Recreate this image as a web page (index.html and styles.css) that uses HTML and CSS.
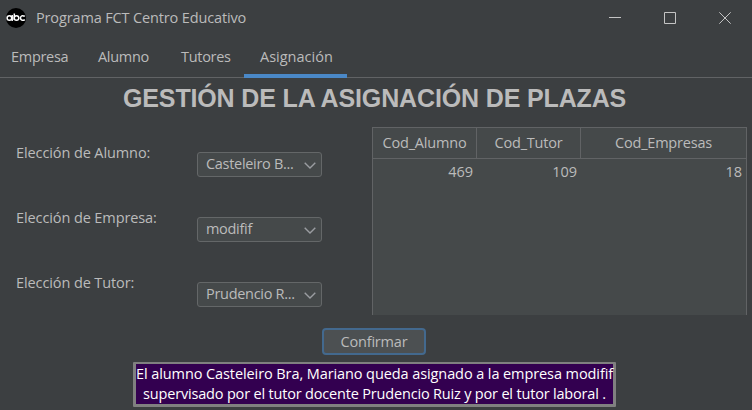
FILE: index.html
```
<!DOCTYPE html>
<html lang="es">
<head>
<meta charset="utf-8">
<title>Programa FCT Centro Educativo</title>
<link rel="stylesheet" href="styles.css">
</head>
<body>
<div class="window">
  <header class="titlebar">
    <svg class="logo" width="20" height="20" viewBox="0 0 20 20"><circle cx="10" cy="10" r="10" fill="#000"/><g fill="none" stroke="#fff" stroke-width="1.5"><circle cx="3.4" cy="10" r="2.3"/><path d="M6.2 7v6M8.3 5.500V12"/><circle cx="10.500" cy="10" r="2.3"/><path d="M18.800 8.300Q15 6.500 14.400 10Q15 13.500 18.800 11.700"/></g></svg>
    <span class="caption">Programa FCT Centro Educativo</span>
    <svg class="controls" width="124" height="14" viewBox="0 0 124 14" fill="none" stroke="#c4c4c4"><path d="M0 6.500h12M55.500 1.500h11v11h-11z"/><path d="M110.300 1.300l11.400 11.400M121.700 1.300l-11.400 11.400"/></svg>
  </header>
  <nav class="tabs">
    <span class="tab empresa">Empresa</span>
    <span class="tab alumno">Alumno</span>
    <span class="tab tutores">Tutores</span>
    <span class="tab active">Asignación</span>
  </nav>
  <h1>GESTIÓN DE LA ASIGNACIÓN DE PLAZAS</h1>
  <main class="content">
    <div class="form">
      <span class="label">Elección de Alumno:</span>
      <div class="combo"><span>Casteleiro B...</span><svg width="12" height="7" viewBox="0 0 12 7"><path d="M.7.7 6 6 11.300.7"/></svg></div>
      <span class="label">Elección de Empresa:</span>
      <div class="combo"><span>modifif</span><svg width="12" height="7" viewBox="0 0 12 7"><path d="M.7.7 6 6 11.300.7"/></svg></div>
      <span class="label">Elección de Tutor:</span>
      <div class="combo"><span>Prudencio R...</span><svg width="12" height="7" viewBox="0 0 12 7"><path d="M.7.7 6 6 11.300.7"/></svg></div>
    </div>
    <div class="table">
      <div class="th">Cod_Alumno</div><div class="th">Cod_Tutor</div><div class="th last">Cod_Empresas</div>
      <div class="td">469</div><div class="td">109</div><div class="td">18</div>
    </div>
  </main>
  <button class="confirm">Confirmar</button>
  <div class="message"><div class="line">El alumno Casteleiro Bra, Mariano queda asignado a la empresa modifif</div><div class="line second">supervisado por el tutor docente Prudencio Ruiz y por el tutor laboral .</div></div>
</div>
</body>
</html>
```
FILE: styles.css
```
* { box-sizing: border-box; }
body {
  margin: 0;
  background: #3c3f41;
  color: #bbb;
  font: 14.5px/20px "Open Sans", "Noto Sans", sans-serif;
  white-space: nowrap;
}
.window { width: 752px; height: 410px; overflow: hidden; }
svg { display: block; flex: none; }
.titlebar { display: flex; align-items: center; height: 36px; padding: 0 19px 0 6px; }
.caption { margin-left: 10px; letter-spacing: -.14px; }
.controls { margin-left: auto; }
.tabs { display: flex; height: 42px; border-bottom: 1px solid #616365; }
.tab { padding: 11px 0 0 11px; height: 42px; letter-spacing: -.3px; }
.empresa { width: 87px; }
.alumno { width: 83px; }
.tutores { width: 74px; }
.tab.active { width: 103px; padding-left: 16px; border-bottom: 4px solid #4a88c7; letter-spacing: 0; }
h1 {
  margin: 0;
  padding: 5px 0 0 123px;
  height: 49px;
  font: bold 25px/30px "Liberation Sans", sans-serif;
  letter-spacing: -.14px;
}
.content { display: flex; height: 188px; }
.form { width: 372px; display: grid; grid-template-columns: 181px 125px; grid-auto-rows: 65px; padding: 16px 0 0 16px; }
.label { letter-spacing: -.1px; }
.combo {
  display: flex; align-items: center; justify-content: space-between;
  height: 25px; margin-top: 9px; padding: 0 5px 2px 8px;
  border: 1px solid #646768; border-radius: 3px; background: #45494a;
  letter-spacing: -.3px;
}
.combo svg { margin-top: 3px; fill: none; stroke: #9a9da1; stroke-width: 1.4; }
.table {
  width: 375px; display: grid; grid-template-columns: 104px 104px 1fr; grid-template-rows: 31px 1fr;
  background: #45494a; border: 1px solid #616365; border-bottom: 0;
}
.th { border-right: 1px solid #616365; border-bottom: 1px solid #616365; text-align: center; line-height: 30px; letter-spacing: -.2px; }
.th.last { border-right: 0; }
.td { text-align: right; padding: 3px 4px 0 0; }
.confirm {
  display: block; width: 104px; height: 27px; margin: 13px 0 0 322px; padding: 0;
  border: 2px solid #43698e; border-radius: 4px; background: #4c5052;
  color: #bbb; font: inherit; line-height: 23px; letter-spacing: -.2px;
}
.message {
  width: 483px; height: 45px; margin: 7px 0 0 133px;
  border: solid #808080; border-width: 2px 3px 3px; border-radius: 1px;
  background: #330050; color: #fff; text-align: center;
}
.line { letter-spacing: -.09px; }
.second { letter-spacing: -.18px; }
```
